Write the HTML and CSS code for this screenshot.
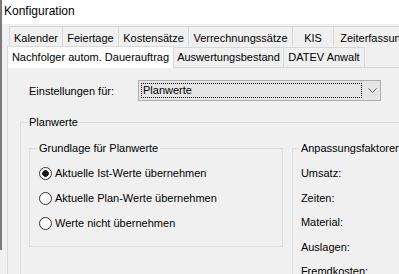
FILE: index.html
```html
<!DOCTYPE html>
<html lang="de">
<head>
<meta charset="utf-8">
<title>Konfiguration</title>
<link rel="stylesheet" href="styles.css">
</head>
<body>
<div class="win">
  <div class="edge"></div>
  <div class="main">
    <div class="title">Konfiguration</div>
    <div class="row1">
      <div class="tab w-kal">Kalender</div>
      <div class="tab w-fei">Feiertage</div>
      <div class="tab w-kos">Kostensätze</div>
      <div class="tab w-ver">Verrechnungssätze</div>
      <div class="tab w-kis">KIS</div>
      <div class="tab w-zei">Zeiterfassung</div>
    </div>
    <div class="row2">
      <div class="tab sel w-nach">Nachfolger autom. Dauerauftrag</div>
      <div class="tab w-aus">Auswertungsbestand</div>
      <div class="tab w-dat">DATEV Anwalt</div>
    </div>
    <div class="panel">
      <div class="setting">
        <span class="setlbl">Einstellungen für:</span>
        <div class="combo">
          <span class="focus">Planwerte</span>
          <svg class="chev" width="9" height="5" viewBox="0 0 9 5"><polyline points="0.5,0.5 4.5,4.5 8.5,0.5" fill="none" stroke="#5a5a5a" stroke-width="1"/></svg>
        </div>
      </div>
      <fieldset class="gb plan">
        <legend>Planwerte</legend>
        <div class="cols">
          <fieldset class="gb grund">
            <legend>Grundlage für Planwerte</legend>
            <div class="opts">
              <div class="radio"><span class="circ on"></span><span>Aktuelle Ist-Werte übernehmen</span></div>
              <div class="radio"><span class="circ"></span><span>Aktuelle Plan-Werte übernehmen</span></div>
              <div class="radio"><span class="circ"></span><span>Werte nicht übernehmen</span></div>
            </div>
          </fieldset>
          <fieldset class="gb anp">
            <legend>Anpassungsfaktoren</legend>
            <div class="facts">
              <div class="fact">Umsatz:</div>
              <div class="fact">Zeiten:</div>
              <div class="fact">Material:</div>
              <div class="fact">Auslagen:</div>
              <div class="fact">Fremdkosten:</div>
            </div>
          </fieldset>
        </div>
      </fieldset>
    </div>
  </div>
</div>
</body>
</html>
```
FILE: styles.css
```css
* { box-sizing: border-box; }
html, body { margin: 0; padding: 0; }
body {
  width: 399px;
  height: 274px;
  overflow: hidden;
  background: #f0f0f0;
  font-family: "Liberation Sans", Arial, sans-serif;
  font-size: 11px;
  color: #000;
}
.win { display: flex; height: 274px; }
.edge { flex: none; width: 2px; height: 250px; background: #7a7a7a; }
.main { flex: 1; min-width: 0; }
.title {
  height: 24px;
  background: #fff;
  padding: 4px 0 0 2px;
  font-size: 12px;
  line-height: 14px;
  white-space: nowrap;
}
.row1 { display: flex; margin: 2px 0 0 7px; height: 20px; }
.row2 { display: flex; align-items: flex-end; margin-left: 5px; height: 21px; }
.tab {
  flex: none;
  border: 1px solid #d9d9d9;
  border-bottom: 0;
  margin-right: -1px;
  text-align: center;
  white-space: nowrap;
  line-height: 14px;
  background: #f0f0f0;
}
.row1 .tab { height: 20px; padding-top: 4px; }
.row2 .tab { height: 20px; padding-top: 2px; }
.row2 .tab.sel {
  height: 22px;
  padding-top: 3px;
  margin-bottom: -1px;
  background: #fff;
  position: relative;
  z-index: 1;
}
.w-kal { width: 54px; }
.w-fei { width: 57px; }
.w-kos { width: 71px; }
.w-ver { width: 105px; }
.w-kis { width: 42px; }
.w-zei { width: 81px; }
.w-nach { width: 167px; }
.w-aus { width: 111px; }
.w-dat { width: 82px; }
.panel {
  margin-left: 5px;
  border-top: 1px solid #d9d9d9;
  border-left: 1px solid #d9d9d9;
  height: 207px;
}
.setting { display: flex; align-items: center; margin-top: 12px; padding-left: 21px; }
.setlbl { width: 109px; line-height: 14px; padding-top: 1px; white-space: nowrap; }
.combo {
  width: 243px;
  height: 21px;
  border: 1px solid #adadad;
  background: #e5e5e5;
  padding: 1px;
  display: flex;
  align-items: center;
}
.focus {
  width: 221px;
  height: 15px;
  margin-left: 1px;
  border: 1px dotted #000;
  padding-left: 1px;
  line-height: 13px;
}
.chev { margin-left: 6px; }
.gb {
  border: 1px solid #dcdcdc;
  margin: 0;
  padding: 0 0 0 6px;
  min-width: 0;
}
.gb legend { padding: 0 2px; line-height: 14px; white-space: nowrap; }
.plan { margin: 14px 0 0 12px; width: 420px; height: 200px; }
.cols { display: flex; align-items: flex-start; padding-top: 12px; margin-left: 2px; }
.grund { width: 259px; padding: 0 0 10px 7px; }
.opts { padding-top: 6px; margin-left: 2px; }
.radio { display: flex; align-items: center; height: 25px; line-height: 25px; white-space: nowrap; }
.circ {
  flex: none;
  width: 13px;
  height: 13px;
  border: 1px solid #333;
  border-radius: 50%;
  background: #fff;
  margin-right: 3px;
}
.circ.on { background: radial-gradient(circle, #1a1a1a 0 3px, #fff 3.6px); }
.anp { margin-left: 9px; width: 150px; height: 160px; }
.facts { padding-top: 6px; margin-left: 2px; }
.fact { height: 24.5px; line-height: 24.5px; white-space: nowrap; }
```
